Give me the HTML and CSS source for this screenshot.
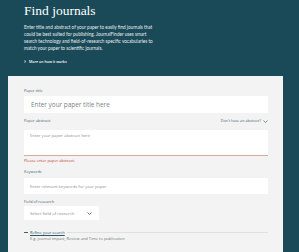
FILE: index.html
```
<!DOCTYPE html>
<html lang="en">
<head>
    <meta charset="UTF-8">
    <title>Find journals</title>
    <link rel="stylesheet" href="styles.css">
</head>
<body>

    <div class="head">
        <h1>Find journals</h1>
        <p class="intro">Enter title and abstract of your paper to easily find journals that could be best suited for publishing. JournalFinder uses smart search technology and field-of-research specific vocabularies to match your paper to scientific journals.</p>
        <a href="javascript:void(0)" class="more"><span class="chev">&#8250;</span>More on how it works</a>
    </div>

    <div class="card">
        <div class="label">Paper title</div>
        <div class="field title-field">Enter your paper title here</div>

        <div class="row">
            <div class="label">Paper abstract</div>
            <a href="javascript:void(0)" class="noabs">Don't have an abstract?
                <svg width="5" height="3" viewBox="0 0 10 6"><path d="M1 1l4 4 4-4" fill="none" stroke="#3d6470" stroke-width="1.4"/></svg>
            </a>
        </div>
        <div class="field abstract">Enter your paper abstract here</div>
        <div class="error">Please enter paper abstract.</div>

        <div class="label kw">Keywords</div>
        <div class="field keywords">Enter relevant keywords for your paper</div>

        <div class="label kw">Field of research</div>
        <div class="field select">
            <span>Select field of research</span>
            <svg width="5" height="3" viewBox="0 0 10 6"><path d="M1 1l4 4 4-4" fill="none" stroke="#3d6470" stroke-width="1.6"/></svg>
        </div>

        <div class="refine">
            <span class="dash"></span>
            <span class="refine-text">Refine your search</span>
            <span class="line"></span>
        </div>
        <div class="hint">E.g. journal impact, Review and Time to publication</div>
    </div>

</body>
</html>
```

FILE: styles.css
```
*{margin: 0;padding: 0;box-sizing: border-box;}
a{text-decoration: none;color: inherit;}
body{background: #1a4a57; font-family: "Open Sans", "Noto Sans", sans-serif; width: 299px; height: 252px; overflow: hidden;}

.head{padding: 2px 24px 0; color: #fff;}
.head h1{font-family: "Liberation Serif", serif; font-weight: normal; font-size: 13.5px; line-height: 18px;}
.intro{width: 131px; margin-top: 3.5px; font-family: Lato, sans-serif; font-size: 4.65px; line-height: 7.3px; color: #e6eef0;}
.more{display: flex; align-items: center; margin-top: 5.5px; height: 6px; font-size: 3.6px; font-weight: 600; color: #fff;}
.more .chev{font-size: 6px; margin-right: 3px; line-height: 6px;}

.card{margin: 12px 16px 0 8px; background: #f4f3f3; padding: 12px 15px 10px 16px;}
.label{font-size: 3.9px; line-height: 6px; color: #3d6470;}
.field{background: #fff; color: #8a8f91; display: flex; align-items: center;}
.title-field{margin-top: 2px; height: 17px; padding-left: 7px; font-size: 6.4px; color: #7d8385;}

.row{display: flex; justify-content: space-between; align-items: center; margin-top: 5px;}
.noabs{font-size: 3.7px; line-height: 6px; color: #3d6470; display: flex; align-items: center;}
.noabs svg{margin-left: 2px;}

.abstract{margin-top: 6px; height: 26px; align-items: flex-start; padding: 3px 0 0 6px; font-size: 4.2px; border-bottom: 1px solid #d6aa9c;}
.error{margin-top: 2px; font-size: 3.9px; line-height: 6px; color: #c0392b;}

.kw{margin-top: 5px;}
.keywords{margin-top: 3px; height: 16px; padding-left: 6px; font-size: 4.2px;}

.select{margin-top: 1px; width: 75px; height: 14px; padding: 0 7px 0 6px; font-size: 4.2px; justify-content: space-between;}

.refine{display: flex; align-items: center; margin-top: 9px; height: 6px;}
.refine .dash{width: 4px; height: 1px; background: #3d6470; margin-right: 2px;}
.refine-text{font-size: 4px; color: #2d5561; text-decoration: underline; margin-right: 2px;}
.refine .line{flex: 1; height: 1px; background: #e0e0e0;}
.hint{margin-top: 1px; padding-left: 6px; font-size: 4px; line-height: 6px; color: #6c7476;}
```
